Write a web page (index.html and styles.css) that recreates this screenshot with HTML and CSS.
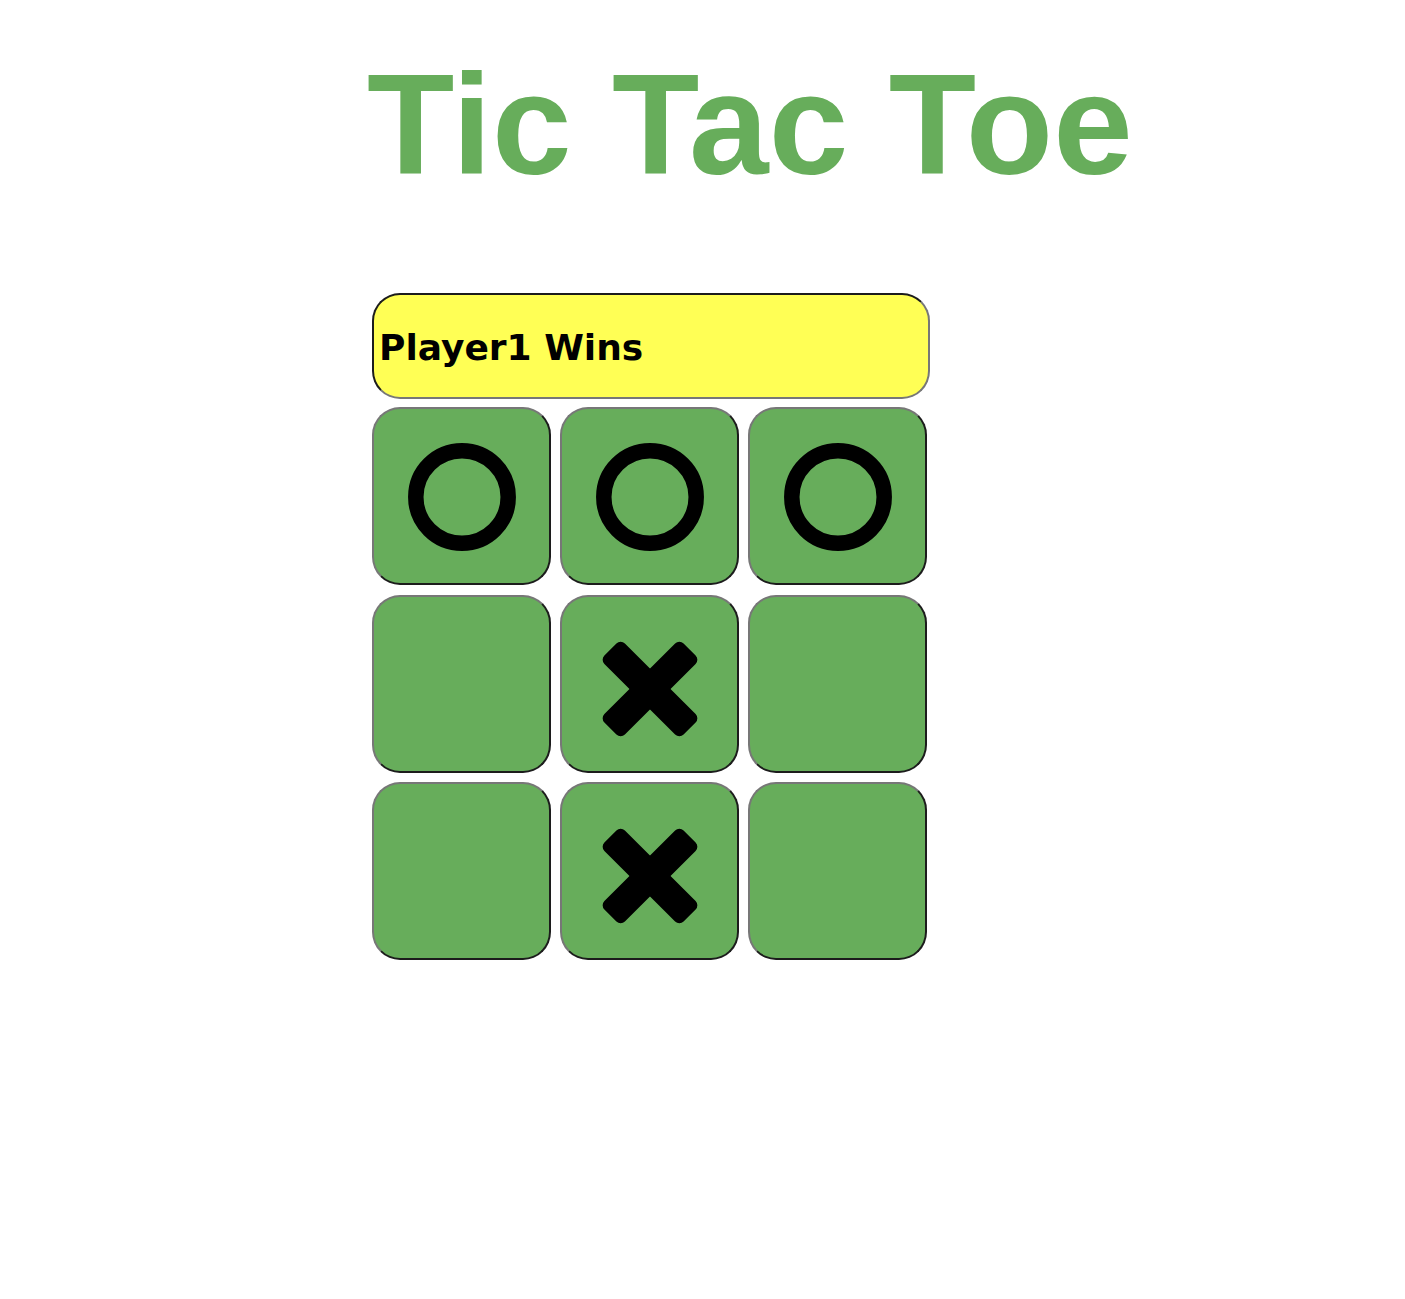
FILE: index.html
```html
<!DOCTYPE html>
<html>
<head>
<meta charset="utf-8">
<link rel="stylesheet" href="styles.css">
</head>
<body>
<div class="page">
  <h1 class="title">Tic Tac Toe</h1>
  <div class="game">
    <div class="status">Player1 Wins</div>
    <div class="board">
      <div class="cell"><svg class="mark" viewBox="0 0 175 174" width="175" height="174"><circle cx="88" cy="88" r="46.2" fill="none" stroke="#000" stroke-width="15.5"/></svg></div>
      <div class="cell"><svg class="mark" viewBox="0 0 175 174" width="175" height="174"><circle cx="88" cy="88" r="46.2" fill="none" stroke="#000" stroke-width="15.5"/></svg></div>
      <div class="cell"><svg class="mark" viewBox="0 0 175 174" width="175" height="174"><circle cx="88" cy="88" r="46.2" fill="none" stroke="#000" stroke-width="15.5"/></svg></div>
      <div class="cell"></div>
      <div class="cell"><svg class="mark" viewBox="0 0 175 174" width="175" height="174"><g transform="rotate(45 88 92)"><rect x="32" y="77.5" width="112" height="29" rx="6"/><rect x="73.5" y="36" width="29" height="112" rx="6"/></g></svg></div>
      <div class="cell"></div>
      <div class="cell"></div>
      <div class="cell"><svg class="mark" viewBox="0 0 175 174" width="175" height="174"><g transform="rotate(45 88 92)"><rect x="32" y="77.5" width="112" height="29" rx="6"/><rect x="73.5" y="36" width="29" height="112" rx="6"/></g></svg></div>
      <div class="cell"></div>
    </div>
  </div>
</div>
</body>
</html>
```
FILE: styles.css
```css
html, body {
  margin: 0;
  padding: 0;
  background: #ffffff;
}

.page {
  padding-left: 367px;
  padding-top: 53px;
}

.title {
  margin: 0;
  font-family: "Liberation Sans", Arial, sans-serif;
  font-weight: bold;
  font-size: 143px;
  line-height: 1;
  letter-spacing: 0.3px;
  color: #67ad5b;
}

.game {
  margin-top: 97px;
  margin-left: 5px;
  width: 558px;
  display: flex;
  flex-direction: column;
  gap: 8px;
}

.status {
  box-sizing: border-box;
  height: 106px;
  width: 558px;
  display: flex;
  align-items: center;
  padding-left: 5px;
  padding-top: 3px;
  background: #ffff55;
  border: 2px solid;
  border-color: #1c1c1c #777777 #777777 #1c1c1c;
  border-radius: 28px;
  font-family: "DejaVu Sans", Verdana, sans-serif;
  font-weight: bold;
  font-size: 36px;
  color: #000;
}

.board {
  display: grid;
  grid-template-columns: repeat(3, 179px);
  grid-auto-rows: 178px;
  column-gap: 9px;
  row-gap: 9.5px;
}

.cell {
  box-sizing: border-box;
  background: #67ad5b;
  border: 2px solid;
  border-color: #777777 #1c1c1c #1c1c1c #777777;
  border-radius: 28px;
  overflow: hidden;
}

.mark {
  display: block;
}
```
